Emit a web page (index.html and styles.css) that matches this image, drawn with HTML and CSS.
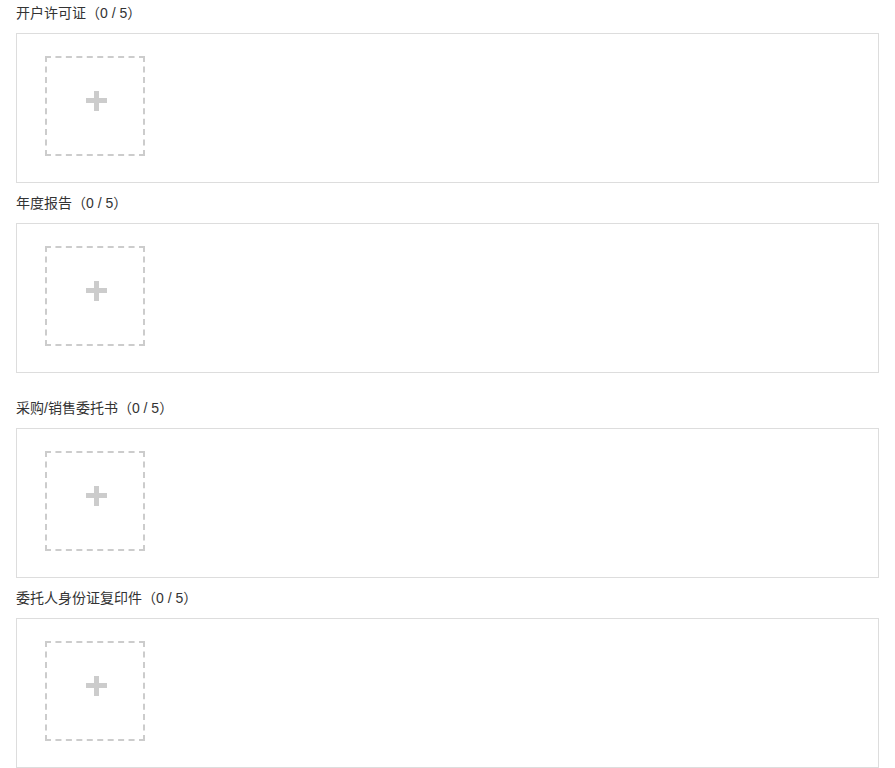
FILE: index.html
```html
<!DOCTYPE html>
<html lang="zh-CN">
<head>
  <meta charset="UTF-8">
  <meta name="viewport" content="width=device-width, initial-scale=1">
  <title>资料上传</title>
  <link rel="stylesheet" href="styles.css">
</head>
<body>

<div class="upload-group">
  <div class="upload-item">
    <div class="upload-label">开户许可证（0 / 5）</div>
    <div class="upload-panel">
      <div class="upload-add">
        <svg class="plus" width="21" height="20" viewBox="0 0 21 20"><rect x="0" y="7" width="21" height="5"/><rect x="8" y="0" width="5" height="20"/></svg>
      </div>
    </div>
  </div>
  <div class="upload-item">
    <div class="upload-label">年度报告（0 / 5）</div>
    <div class="upload-panel">
      <div class="upload-add">
        <svg class="plus" width="21" height="20" viewBox="0 0 21 20"><rect x="0" y="7" width="21" height="5"/><rect x="8" y="0" width="5" height="20"/></svg>
      </div>
    </div>
  </div>
</div>

<div class="upload-group">
  <div class="upload-item">
    <div class="upload-label">采购/销售委托书（0 / 5）</div>
    <div class="upload-panel">
      <div class="upload-add">
        <svg class="plus" width="21" height="20" viewBox="0 0 21 20"><rect x="0" y="7" width="21" height="5"/><rect x="8" y="0" width="5" height="20"/></svg>
      </div>
    </div>
  </div>
  <div class="upload-item">
    <div class="upload-label">委托人身份证复印件（0 / 5）</div>
    <div class="upload-panel">
      <div class="upload-add">
        <svg class="plus" width="21" height="20" viewBox="0 0 21 20"><rect x="0" y="7" width="21" height="5"/><rect x="8" y="0" width="5" height="20"/></svg>
      </div>
    </div>
  </div>
</div>

</body>
</html>
```

FILE: styles.css
```css
body {
  margin: 0;
  padding: 3px 16px 0;
  background: white;
  font-family: "Liberation Sans", "Noto Sans CJK SC", sans-serif;
  font-size: 14px;
  color: #333;
}
.upload-group {
  margin-bottom: 25px;
}
.upload-item {
  margin-bottom: 10px;
}
.upload-label {
  line-height: 20px;
  margin-bottom: 10px;
}
.upload-panel {
  border: 1px solid #ddd;
  height: 150px;
  box-sizing: border-box;
  padding: 22px 28px;
}
.upload-add {
  width: 100px;
  height: 100px;
  box-sizing: border-box;
  border: 2px dashed #ccc;
  display: flex;
  justify-content: center;
  align-items: center;
  cursor: pointer;
}
.plus {
  fill: #ccc;
  margin: 0 0 10px 2px;
}
```
